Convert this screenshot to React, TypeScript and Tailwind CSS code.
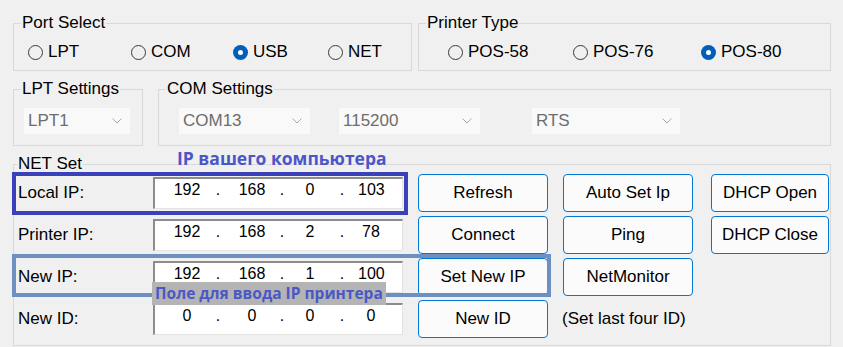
import React from 'react'

const Radio = ({ label, checked, className }: { label: string, checked?: boolean, className?: string }) => (
    <div className={`flex items-center gap-[5px] ${className ?? ''}`}>
        {checked ? (
            <span className='w-[15px] h-[15px] rounded-full bg-[#005fb8] flex items-center justify-center'>
                <span className='w-[5px] h-[5px] rounded-full bg-white' />
            </span>
        ) : (
            <span className='w-[15px] h-[15px] rounded-full border border-[#3a3a3a]' />
        )}
        <span>{label}</span>
    </div>
)

const Chevron = () => (
    <svg width='10' height='6' viewBox='0 0 10 6' fill='none'>
        <path d='M0.5 0.5 L5 5 L9.5 0.5' stroke='#a8a8a8' strokeWidth='1' />
    </svg>
)

const Combo = ({ value, className }: { value: string, className: string }) => (
    <div className={`h-[26px] bg-[#f9f9f9] flex items-center justify-between pl-[4px] pr-[8px] text-[#6d6d6d] ${className}`}>
        <span>{value}</span>
        <Chevron />
    </div>
)

const IpBox = ({ parts }: { parts: string[] }) => (
    <div className='mt-[3px] h-[32px] bg-white border-t-2 border-l-2 border-t-[#8c8c8c] border-l-[#8c8c8c] border-b border-r border-b-[#e3e3e3] border-r-[#e3e3e3] text-[16px] leading-[22px]'>
        <div className='grid grid-cols-[30px_32px_36px_24px_32px_32px_26px] pl-[17px]'>
            <span className='text-center'>{parts[0]}</span>
            <span className='text-center'>.</span>
            <span className='text-center'>{parts[1]}</span>
            <span className='text-center'>.</span>
            <span className='text-center'>{parts[2]}</span>
            <span className='text-center'>.</span>
            <span className='text-center'>{parts[3]}</span>
        </div>
    </div>
)

const Btn = ({ label }: { label: string }) => (
    <button className='h-[38px] w-full rounded-[4px] border border-[#0078d4] bg-[#fbfbfb] text-[17px] text-black'>
        {label}
    </button>
)

const Label = ({ text }: { text: string }) => (
    <div className='h-[38px] flex items-center'>{text}</div>
)

export default function App() {
    return (
        <div className="relative w-[843px] h-[347px] overflow-hidden bg-[#f0f0f0] text-[17px] text-black font-['Liberation_Sans',Arial,sans-serif] pt-[13px] pl-[13px] pr-[12px]">
            <div className='flex gap-[6px]'>
                <fieldset className='w-[399px] h-[58px] border border-[#d9d9d9]'>
                    <legend className='ml-[7px] px-[1px] leading-[20px]'>Port Select</legend>
                    <div className='flex items-center h-[20px] mt-[9px] pl-[14px]'>
                        <Radio label='LPT' className='w-[103px]' />
                        <Radio label='COM' className='w-[102px]' />
                        <Radio label='USB' checked className='w-[95px]' />
                        <Radio label='NET' />
                    </div>
                </fieldset>
                <fieldset className='flex-1 h-[58px] border border-[#d9d9d9]'>
                    <legend className='ml-[7px] px-[1px] leading-[20px]'>Printer Type</legend>
                    <div className='flex items-center h-[20px] mt-[9px] pl-[29px]'>
                        <Radio label='POS-58' className='w-[125px]' />
                        <Radio label='POS-76' className='w-[128px]' />
                        <Radio label='POS-80' checked />
                    </div>
                </fieldset>
            </div>

            <div className='flex gap-[15px] mt-[8px]'>
                <fieldset className='w-[130px] h-[67px] border border-[#d9d9d9]'>
                    <legend className='ml-[7px] px-[1px] leading-[20px]'>LPT Settings</legend>
                    <div className='mt-[9px] pl-[10px]'>
                        <Combo value='LPT1' className='w-[106px]' />
                    </div>
                </fieldset>
                <fieldset className='flex-1 h-[67px] border border-[#d9d9d9]'>
                    <legend className='ml-[7px] px-[1px] leading-[20px]'>COM Settings</legend>
                    <div className='flex mt-[9px] pl-[20px]'>
                        <Combo value='COM13' className='w-[131px]' />
                        <Combo value='115200' className='w-[141px] ml-[29px]' />
                        <Combo value='RTS' className='w-[148px] ml-[52px]' />
                    </div>
                </fieldset>
            </div>

            <fieldset className='mt-[8px] h-[192px] border border-[#d9d9d9]'>
                <legend className='ml-[3px] px-[1px] leading-[20px]'>NET Set</legend>
                <div className='grid grid-cols-[120px_250px_130px_133px_118px] grid-rows-[42px_42px_42px_42px] gap-x-[15px] pl-[4px]'>
                    <Label text='Local IP:' />
                    <IpBox parts={['192', '168', '0', '103']} />
                    <Btn label='Refresh' />
                    <div className='w-[130px]'><Btn label='Auto Set Ip' /></div>
                    <Btn label='DHCP Open' />

                    <Label text='Printer IP:' />
                    <IpBox parts={['192', '168', '2', '78']} />
                    <Btn label='Connect' />
                    <div className='w-[130px]'><Btn label='Ping' /></div>
                    <Btn label='DHCP Close' />

                    <Label text='New IP:' />
                    <IpBox parts={['192', '168', '1', '100']} />
                    <Btn label='Set New IP' />
                    <div className='w-[130px]'><Btn label='NetMonitor' /></div>
                    <div />

                    <Label text='New ID:' />
                    <IpBox parts={['0', '0', '0', '0']} />
                    <Btn label='New ID' />
                    <div className='h-[38px] flex items-center -ml-[1px] whitespace-nowrap'>(Set last four ID)</div>
                    <div />
                </div>
            </fieldset>

            {/* annotations drawn over the form */}
            <div className='absolute left-[12px] top-[172px] w-[396px] h-[43px] border-4 border-[#3b41b8]' />
            <div className="absolute left-[177px] top-[147px] leading-[22px] text-[17.5px] font-bold text-[#4b56c9] font-['Open_Sans',sans-serif] whitespace-nowrap">
                IP вашего компьютера
            </div>
            <div className='absolute left-[12px] top-[254px] w-[539px] h-[43px] border-4 border-[#6d8fc1]' />
            <div className="absolute left-[152px] top-[282px] w-[234px] h-[23px] bg-[#b4b4b4] pl-[3px] leading-[22px] text-[15.5px] font-bold text-[#4a58c6] font-['Open_Sans',sans-serif] whitespace-nowrap">
                Поле для ввода IP принтера
            </div>
        </div>
    )
}
